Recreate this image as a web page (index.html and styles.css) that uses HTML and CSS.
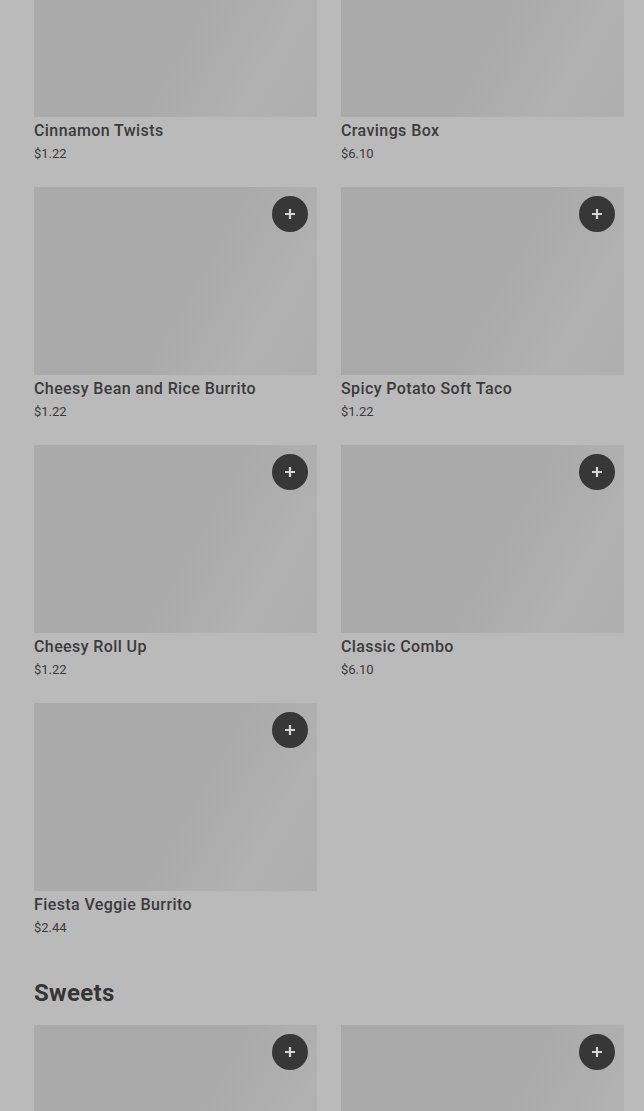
FILE: index.html
```html
<!DOCTYPE html>
<html>
<head>
<meta charset="utf-8">
<link rel="stylesheet" href="styles.css">
</head>
<body>
<main class="page">
  <section class="section">
    <div class="grid">
      <div class="card">
        <div class="thumb"></div>
        <div class="info"><div class="title">Cinnamon Twists</div><div class="price">$1.22</div></div>
      </div>
      <div class="card">
        <div class="thumb"></div>
        <div class="info"><div class="title">Cravings Box</div><div class="price">$6.10</div></div>
      </div>
      <div class="card">
        <div class="thumb"><button class="add"><svg viewBox="0 0 12 12" width="12" height="12"><path d="M6 1v10M1 6h10" stroke="currentColor" stroke-width="2.2" fill="none"/></svg></button></div>
        <div class="info"><div class="title">Cheesy Bean and Rice Burrito</div><div class="price">$1.22</div></div>
      </div>
      <div class="card">
        <div class="thumb"><button class="add"><svg viewBox="0 0 12 12" width="12" height="12"><path d="M6 1v10M1 6h10" stroke="currentColor" stroke-width="2.2" fill="none"/></svg></button></div>
        <div class="info"><div class="title">Spicy Potato Soft Taco</div><div class="price">$1.22</div></div>
      </div>
      <div class="card">
        <div class="thumb"><button class="add"><svg viewBox="0 0 12 12" width="12" height="12"><path d="M6 1v10M1 6h10" stroke="currentColor" stroke-width="2.2" fill="none"/></svg></button></div>
        <div class="info"><div class="title">Cheesy Roll Up</div><div class="price">$1.22</div></div>
      </div>
      <div class="card">
        <div class="thumb"><button class="add"><svg viewBox="0 0 12 12" width="12" height="12"><path d="M6 1v10M1 6h10" stroke="currentColor" stroke-width="2.2" fill="none"/></svg></button></div>
        <div class="info"><div class="title">Classic Combo</div><div class="price">$6.10</div></div>
      </div>
      <div class="card">
        <div class="thumb"><button class="add"><svg viewBox="0 0 12 12" width="12" height="12"><path d="M6 1v10M1 6h10" stroke="currentColor" stroke-width="2.2" fill="none"/></svg></button></div>
        <div class="info"><div class="title">Fiesta Veggie Burrito</div><div class="price">$2.44</div></div>
      </div>
    </div>
  </section>
  <section class="section sweets">
    <h2 class="heading">Sweets</h2>
    <div class="grid">
      <div class="card">
        <div class="thumb"><button class="add"><svg viewBox="0 0 12 12" width="12" height="12"><path d="M6 1v10M1 6h10" stroke="currentColor" stroke-width="2.2" fill="none"/></svg></button></div>
      </div>
      <div class="card">
        <div class="thumb"><button class="add"><svg viewBox="0 0 12 12" width="12" height="12"><path d="M6 1v10M1 6h10" stroke="currentColor" stroke-width="2.2" fill="none"/></svg></button></div>
      </div>
    </div>
  </section>
</main>
</body>
</html>
```
FILE: styles.css
```css
html, body {
  margin: 0;
  padding: 0;
  background: #bababa;
  overflow: hidden;
}
body {
  font-family: Roboto, "Liberation Sans", sans-serif;
  color: #333333;
}
.page {
  margin-top: -71px;
  padding: 0 20px 0 34px;
}
.grid {
  display: grid;
  grid-template-columns: 283px 283px;
  column-gap: 24px;
  row-gap: 24px;
}
.thumb {
  position: relative;
  height: 188px;
  background: linear-gradient(120deg, #aaaaaa 0%, #aaaaaa 55%, #b1b1b1 80%, #aeaeae 100%);
}
.info {
  padding-top: 4px;
}
.title {
  font-size: 16px;
  line-height: 20px;
  font-weight: 500;
  letter-spacing: 0.4px;
  color: #3b3b3b;
}
.price {
  margin-top: 4px;
  font-size: 13px;
  line-height: 18px;
  color: #3a3a3a;
}
.add {
  position: absolute;
  top: 9px;
  right: 9px;
  width: 36px;
  height: 36px;
  border: none;
  border-radius: 50%;
  background: #373737;
  color: #d6d6d6;
  padding: 0;
  display: flex;
  align-items: center;
  justify-content: center;
}
.sweets {
  margin-top: 40px;
}
.heading {
  margin: 0 0 16px;
  font-size: 24px;
  line-height: 32px;
  font-weight: 700;
  letter-spacing: 0.3px;
  color: #353535;
}
```
